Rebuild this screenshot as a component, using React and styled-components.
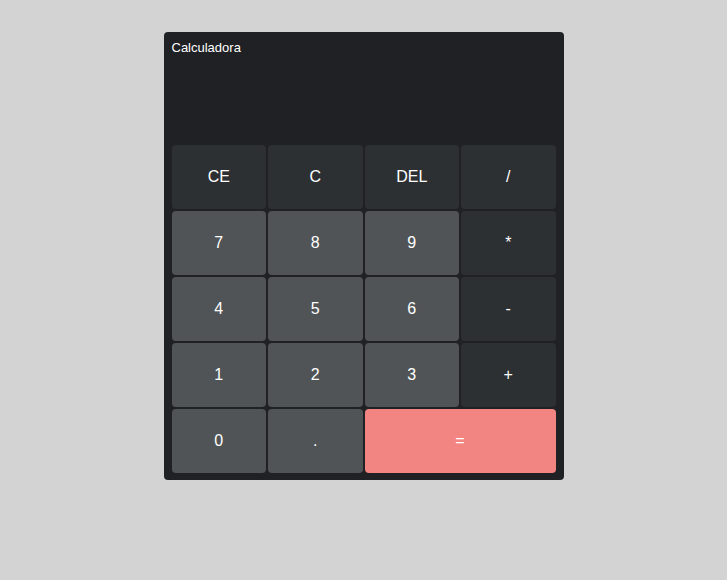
import React from 'react'
import styled, { createGlobalStyle } from 'styled-components'

const GlobalStyle = createGlobalStyle`
  body {
    margin: 0;
    background-color: #d3d3d3;
    font-family: "Liberation Sans", Arial, sans-serif;
  }
`;

const Page = styled.div`
  display: flex;
  justify-content: center;
  align-items: flex-start;
  padding-top: 32px;
  min-height: 100vh;
  box-sizing: border-box;
`;

const Calculator = styled.div`
  width: 400px;
  box-sizing: border-box;
  padding: 8px 8px 7px;
  background-color: #202124;
  border-radius: 4px;
  display: flex;
  flex-direction: column;
`;

const Display = styled.div`
  height: 105px;
  color: #ffffff;
  font-size: 13px;
  line-height: 15px;
`;

const Keys = styled.div`
  display: grid;
  grid-template-columns: repeat(4, 1fr);
  grid-auto-rows: 64px;
  gap: 2px;
`;

const colors = {
  op: '#2d3033',
  num: '#505457',
  equals: '#f28482',
};

const Key = styled.button`
  grid-column: span ${({ $span }) => $span || 1};
  border: none;
  border-radius: 4px;
  background-color: ${({ $kind }) => colors[$kind]};
  color: #ffffff;
  font-family: "Liberation Sans", Arial, sans-serif;
  font-size: 16px;
  cursor: pointer;
  padding: 0;
`;

const keys = [
  ['CE', 'op'], ['C', 'op'], ['DEL', 'op'], ['/', 'op'],
  ['7', 'num'], ['8', 'num'], ['9', 'num'], ['*', 'op'],
  ['4', 'num'], ['5', 'num'], ['6', 'num'], ['-', 'op'],
  ['1', 'num'], ['2', 'num'], ['3', 'num'], ['+', 'op'],
  ['0', 'num'], ['.', 'num'], ['=', 'equals', 2],
];

export default function App() {
  return (
    <>
      <GlobalStyle />
      <Page>
        <Calculator>
          <Display>Calculadora</Display>
          <Keys>
            {keys.map(([label, kind, span]) => (
              <Key key={label} $kind={kind} $span={span}>{label}</Key>
            ))}
          </Keys>
        </Calculator>
      </Page>
    </>
  )
}
